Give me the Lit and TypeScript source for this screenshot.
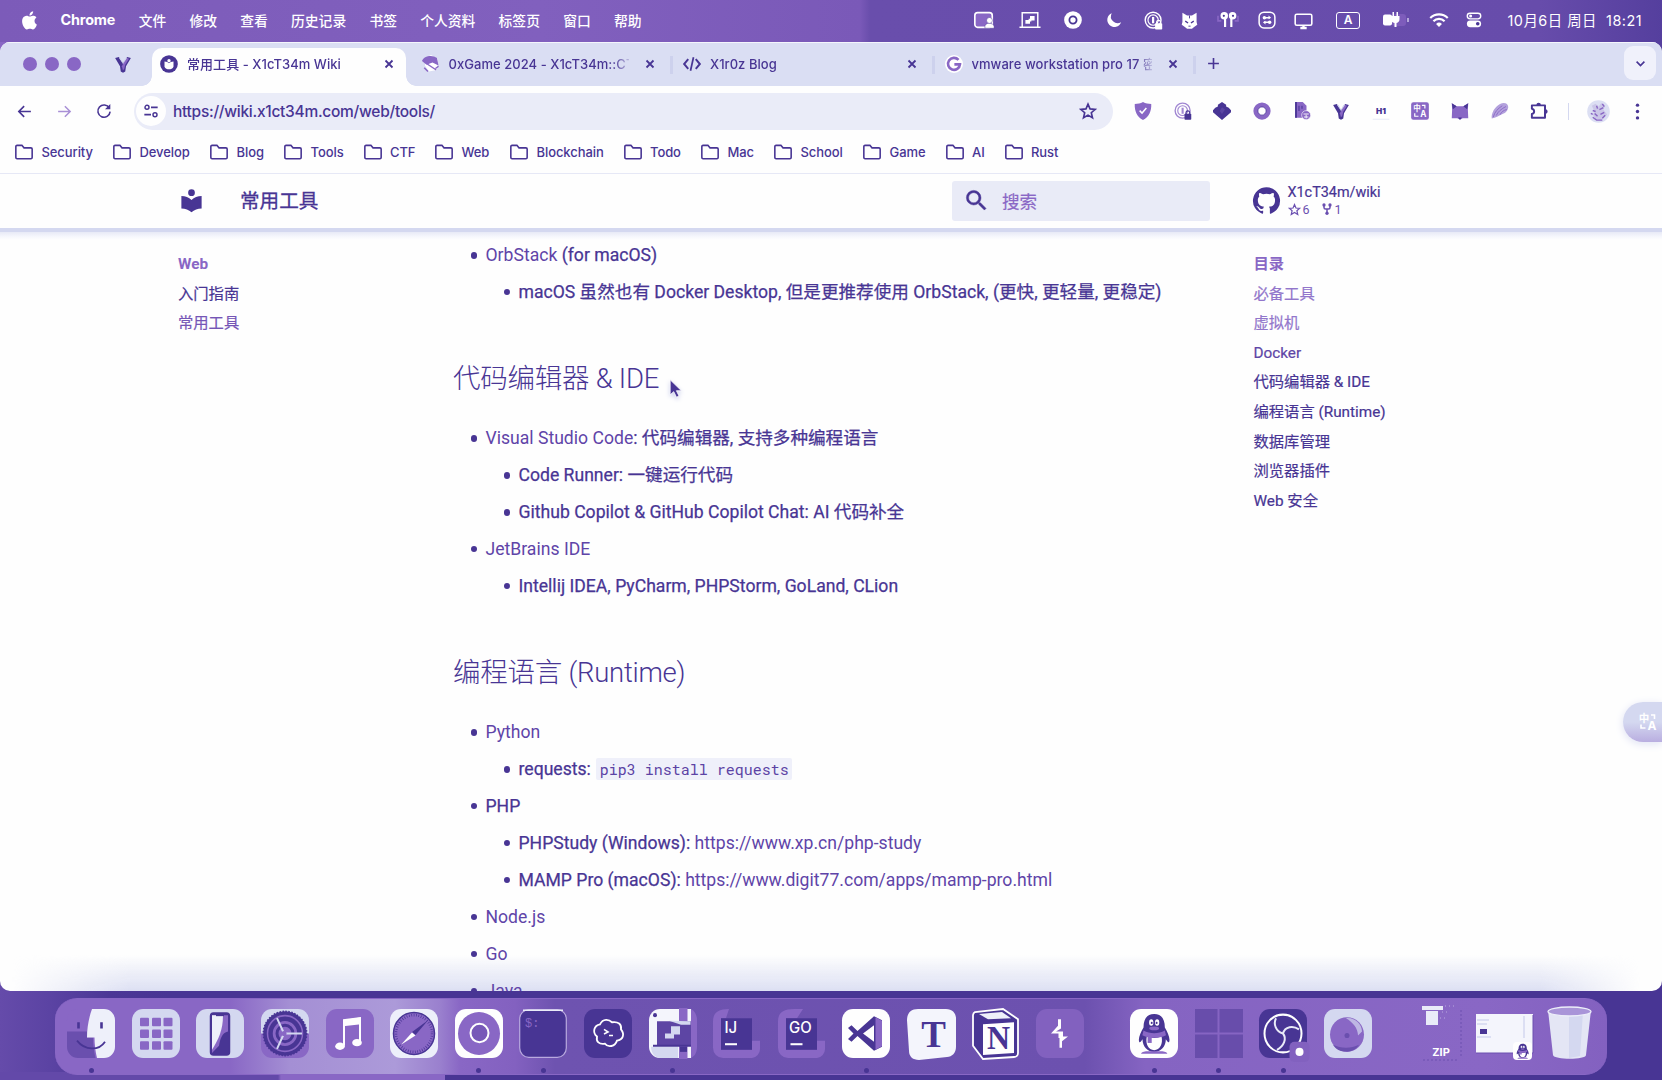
import { LitElement, html, svg, css, nothing } from "lit";
import { customElement, property } from "lit/decorators.js";
import { classMap } from "lit/directives/class-map.js";

const D = "#483594";
const M = "#8967c5";
const L = "#d4d8f0";
const W = "#fefefe";

const onePassword = (ring: string, lock: string) => svg`
  <circle cx="11.5" cy="11.5" r="10" fill="none" stroke=${ring} stroke-width="1.8"/>
  <circle cx="11.5" cy="11.5" r="6.5" fill="none" stroke=${ring} stroke-width="1.5"/>
  <path d="M11.5 7.5v8" stroke=${ring} stroke-width="2.8"/>
  <rect x="14" y="15.500" width="9" height="8" rx="1" fill=${lock}/>
  <path d="M16 16v-1.8a2.500 2.500 0 0 1 5 0V16" fill="none" stroke=${lock} stroke-width="1.6"/>`;

const yMark = svg`
  <path d="M1.500 4l5-1.500 5.500 8v13l-3-1.500-1-7z" fill=${D}/>
  <path d="M22.500 4l-5-1.500-5.500 8v13l3-1.500 1-7z" fill=${D}/>
  <path d="M17 3.500l3 1.500-5 8-1.500 6-1.500 1V11z" fill=${M}/>
  <path d="M6.500 3.500l2.500.500 3 6.500 3-6.500 2.500-.500L12 12z" fill=${L}/>
  <path d="M12 12v9l-1.500-6z" fill=${M}/>`;

const penguin = svg`
  <path d="M12 1c4.500 0 6.500 3 6.500 7.500 1.700 2.600 3.500 6 2.600 8-.5 .5-1.300-.5-2-1.500 0 4-3 7-7.100 7s-7.100-3-7.100-7c-.7 1-1.500 2-2 1.500-.9-2 .9-5.400 2.600-8C5.500 4 7.500 1 12 1z" fill=${D}/>
  <path d="M7 21.500c-2 .2-3 .8-3 1.500h16c0-.7-1-1.300-3-1.500z" fill=${M}/>
  <path d="M7.500 13.500c3 1 6 1 9 0 1 4-1 7.500-4.500 7.500s-5.500-3.500-4.500-7.500z" fill=${W}/>
  <path d="M5.500 10.200c4 2 9 2 13 0l.7 2.500c-4.500 2-10 2-14.400 0z" fill=${M}/>
  <path d="M8 13h2.500v4H8z" fill=${M}/>
  <ellipse cx="10.200" cy="5.800" rx="1.300" ry="1.800" fill=${W}/><ellipse cx="13.800" cy="5.800" rx="1.300" ry="1.800" fill=${W}/>
  <circle cx="10.500" cy="6" r=".6" fill=${D}/><circle cx="13.500" cy="6" r=".6" fill=${D}/>
  <ellipse cx="12" cy="9" rx="3" ry="1" fill=${M}/>`;

/* Every glyph is drawn in a 24 x 24 box. */
const glyphs: Record<string, unknown> = {
  apple: svg`<path fill="currentColor" d="M17.050 12.540c-.03-2.900 2.370-4.290 2.480-4.360-1.350-1.970-3.450-2.240-4.200-2.270-1.790-.18-3.490 1.050-4.400 1.050-.9 0-2.300-1.030-3.790-1-1.950.03-3.740 1.130-4.750 2.880-2.020 3.510-.52 8.710 1.450 11.560.97 1.400 2.120 2.960 3.630 2.900 1.460-.06 2.010-.94 3.770-.94s2.260.94 3.800.91c1.570-.03 2.560-1.420 3.520-2.820 1.110-1.620 1.570-3.190 1.590-3.270-.03-.02-3.050-1.170-3.100-4.640zM14.150 4.030C14.960 3.050 15.500 1.690 15.350.34c-1.160.05-2.560.77-3.390 1.750-.74.86-1.390 2.240-1.220 3.560 1.290.1 2.610-.66 3.410-1.620z"/>`,
  screenUser: svg`<rect x="2" y="4" width="19" height="16" rx="3" fill=${M} stroke="#fff" stroke-width="1.800"/><path d="M13 21v-2c0-2 2-3.500 4.500-3.500s5.500 1.500 5.500 3.500v2z" fill="#fff" stroke=${D} stroke-width=".5"/><circle cx="18" cy="12.500" r="3.200" fill="#fff" stroke=${D} stroke-width=".5"/>`,
  laptop: svg`<path d="M3.500 19V4h17v15M0.500 20h23" fill="none" stroke="#fff" stroke-width="1.600"/><path d="M7 12h5v4H7z M12 7.500h5v5h-5z M10.500 10.500h3v3h-3z" fill="#fff"/>`,
  ring: svg`<circle cx="12" cy="12" r="11.800" fill="#fff"/><circle cx="12" cy="12" r="4.800" fill="#fff" stroke=${D} stroke-width="2.400"/>`,
  moon: svg`<path d="M9 3a9.500 9.500 0 1 0 12.500 12A9 9 0 0 1 9 3z" fill="#fff"/>`,
  passMenu: onePassword("#fff", "#fff"),
  cat: svg`<path d="M2 1l6.500 4h7L22 1v13l1 4-4.500 3-3 2.500h-7L5.500 21 1 18l1-4z" fill="#fff"/><path d="M6 13l4 2.500M18 13l-4 2.500" stroke=${D} stroke-width="2"/><path d="M12 5v4M10.500 20h3" stroke=${D} stroke-width="1.300"/>`,
  pods: svg`<circle cx="7.500" cy="7" r="4.500" fill="#fff"/><circle cx="17.500" cy="7" r="4.500" fill="#fff"/><path d="M8.500 9v11.500M16 9v11.500" stroke="#fff" stroke-width="2.600"/><circle cx="7" cy="7" r="1.300" fill=${D}/><circle cx="18" cy="7" r="1.300" fill=${D}/><path d="M0 7v6h4M24 7v6h-4" stroke=${M} fill="none" stroke-width="2"/>`,
  swap: svg`<rect x="1.500" y="1.500" width="21" height="21" rx="6.500" fill="none" stroke="#fff" stroke-width="2"/><path d="M7 9h9M8 15h9" stroke="#fff" stroke-width="2"/><circle cx="8.500" cy="9" r="2.300" fill="#fff"/><circle cx="15.500" cy="15" r="2.300" fill="#fff"/><path d="M14 6l3.500 3-3.500 2z M10 13l-3.500 2 3.500 3z" fill="#fff"/>`,
  display: svg`<rect x="1.500" y="4" width="21" height="14" rx="2" fill="none" stroke="#fff" stroke-width="2"/><path d="M8 21.500h8M12 18v3.500" stroke="#fff" stroke-width="3"/>`,
  wifi: svg`<path d="M1.500 9.500a15 15 0 0 1 21 0M5.300 13.500a9.500 9.500 0 0 1 13.400 0" fill="none" stroke="#fff" stroke-width="2.600"/><path d="M8.500 16.700a5 5 0 0 1 7 0L12 20.500z" fill="#fff"/>`,
  control: svg`<rect x="3" y="3" width="18" height="7.500" rx="3.750" fill="none" stroke="#fff" stroke-width="1.800"/><circle cx="7.500" cy="6.750" r="2" fill="#fff"/><rect x="2.500" y="12.500" width="19" height="9" rx="4.500" fill="#fff"/><circle cx="17" cy="17" r="2.400" fill=${D}/>`,
  back: svg`<path d="M21 12H4M11.500 4.500L4 12l7.500 7.500" fill="none" stroke="currentColor" stroke-width="2.300"/>`,
  forward: svg`<path d="M3 12h17M12.500 4.500L20 12l-7.500 7.500" fill="none" stroke="currentColor" stroke-width="2.100"/>`,
  reload: svg`<path d="M20 7.500A9.200 9.200 0 1 0 21.200 13" fill="none" stroke="currentColor" stroke-width="2.400"/><path d="M21.500 1.500v8h-8z" fill="currentColor"/>`,
  tune: svg`<circle cx="6" cy="6.500" r="3" fill="none" stroke="currentColor" stroke-width="2.200"/><path d="M12 6.500h10M2 17.500h10" stroke="currentColor" stroke-width="2.400"/><circle cx="18" cy="17.500" r="3" fill="none" stroke="currentColor" stroke-width="2.200"/>`,
  star: svg`<path d="M12 2.800l2.700 6.400 6.900.6-5.200 4.500 1.600 6.800-6-3.600-6 3.600 1.600-6.800-5.200-4.500 6.900-.6z" fill="none" stroke="currentColor" stroke-width="2.200"/>`,
  folder: svg`<path d="M2.200 5.500c0-.9.600-1.500 1.500-1.500H9.500l2.500 3h8.300c.9 0 1.500.6 1.500 1.500v10c0 .9-.6 1.500-1.500 1.500H3.700c-.9 0-1.500-.6-1.500-1.500z" fill="none" stroke="currentColor" stroke-width="1.900"/>`,
  close: svg`<path d="M5 5l14 14M19 5L5 19" stroke="currentColor" stroke-width="3.600"/>`,
  plus: svg`<path d="M12 2v20M2 12h20" stroke="currentColor" stroke-width="3"/>`,
  chevron: svg`<path d="M3.500 8l8.500 8.500L20.500 8" fill="none" stroke="currentColor" stroke-width="3.600"/>`,
  reader: svg`<path fill="currentColor" d="M12 8a3 3 0 0 0 3-3 3 3 0 0 0-3-3 3 3 0 0 0-3 3 3 3 0 0 0 3 3m0 3.540C9.640 9.350 6.500 8 3 8v11c3.500 0 6.640 1.350 9 3.540 2.360-2.190 5.500-3.540 9-3.540V8c-3.500 0-6.640 1.350-9 3.540z"/>`,
  readerBadge: svg`<circle cx="12" cy="12" r="11.800" fill=${D}/><path d="M6 8.500c2.800 0 4.500 1 6 2.500 1.500-1.500 3.200-2.500 6-2.500v7c-1 2.300-3.500 3.500-6 3.500s-5-1.200-6-3.500z" fill=${W}/><circle cx="12" cy="7.500" r="2.200" fill=${W}/>`,
  anime: svg`<path d="M4 4l8-4 9 5-1 15-11 2-5-8z" fill="#fff"/><path d="M0 8C2 1 14-1 20 4l2 10-8-4-8 3z" fill=${M}/><path d="M3 17l5 5M18 18l4-3M7 12l12 8" stroke=${M} stroke-width="2"/>`,
  code: svg`<path d="M7 5.500L1.500 12 7 18.500M17 5.500l5.500 6.500-5.500 6.500" fill="none" stroke="currentColor" stroke-width="2.600"/><path d="M14 3l-4 18" stroke="currentColor" stroke-width="2.300"/>`,
  google: svg`<circle cx="12" cy="12" r="12" fill="#fff"/><path d="M18 6.500A8 8 0 1 0 20 12.500h-7.500" fill="none" stroke=${M} stroke-width="3.400"/>`,
  yMark,
  shield: svg`<path d="M12 0c3.500 2 7 2.500 11 2.500C23.500 12 20 19.500 12 24 4 19.500.500 12 1 2.500 5 2.500 8.500 2 12 0z" fill=${M}/><path d="M7.500 11.500l3.200 3.200L16.500 8" fill="none" stroke="#fff" stroke-width="2"/>`,
  passExt: onePassword("#a187d2", D),
  cube: svg`<path d="M12 0l5.500 3.800V6L21 7.500 24 11v2.500L19 18l-7 6-7-6-5-4.500V11l3-3.500L6.500 6V3.800z" fill=${D}/><path d="M9 12l3-5 4 3-4 6z" fill="#5b46a3"/>`,
  donut: svg`<circle cx="12" cy="12" r="8.500" fill="#fff" stroke=${M} stroke-width="6"/><circle cx="12" cy="12" r="5.500" fill="none" stroke=${D} stroke-width="1"/>`,
  docBug: svg`<path d="M3 0h10l5 5v16H3z" fill=${M}/><path d="M4 0v21" stroke=${D} stroke-width="2.400"/><path d="M8 5v7M12 5v4" stroke=${D} stroke-width="1.400"/><circle cx="17.500" cy="17.500" r="6" fill=${M} stroke="#fff" stroke-width=".8"/><path d="M14 16h7M17.500 17v5M14.500 20h6" stroke="#fff" stroke-width="1.200"/>`,
  h1: svg`<rect x="1" y="1" width="22" height="22" rx="2" fill="#fff"/><path d="M1 23h22" stroke="#e6e8f6" stroke-width="1.300"/><text x="12" y="16.500" text-anchor="middle" class="glyph-h1">H1</text>`,
  translate: svg`<rect x=".2" y=".2" width="23.600" height="23.600" rx="3" fill=${M}/><text x="8" y="12" text-anchor="middle" class="glyph-cn">中</text><text x="16.500" y="20.500" text-anchor="middle" class="glyph-a">A</text><path d="M14.500 4.500h4v4M5 15v4h5" stroke="#fff" fill="none" stroke-width="1.600"/>`,
  fox: svg`<path d="M1 1.500l6.500 4h9L23 1.500 22.500 10 23 21.500h-7.500L12 23.500 8.500 21.500H1L1.500 10z" fill=${M}/><path d="M1 1.500l6.500 4-5 4zM23 1.500l-6.500 4 5 4zM9.500 20.500h5L12 23.500z" fill=${D}/>`,
  leaf: svg`<path d="M1 22C0 15 5 6 12 2.500c6-2.500 11-.5 11 4.500-1 6-5 8.500-9 9.500-3 2-8 4-13 5.500z" fill="#b3a1dc"/><path d="M3 20c2-7 6-11 12-15M7 18c2-5 7-9 13-12M12 17c2-4 5-6 9-7" stroke=${M} stroke-width="1.200" fill="none"/>`,
  puzzle: svg`<path d="M2.500 4.500h17.500v16.500h-17.500v-5c4-1 4-6 0-7z" fill="none" stroke="currentColor" stroke-width="2.600" stroke-linejoin="round"/><path d="M8.500 4a3 3 0 0 1 6 0zM20.500 9.500a3 3 0 0 1 0 6z" fill="currentColor"/>`,
  avatar: svg`<circle cx="12" cy="12" r="11.800" fill="#dcdff3"/><path d="M5 6l4-2 3 3 3-4 4 3-2 4 4 5-6 6-6-1-3-5 2-3z" fill="#cbc6e8"/><path d="M6 11l3 1M13 10l4-2M8 14l3 3M14 15l4-2M6 18l4 3h6M16 4l2 3M10 6l1 3M4 14l2 1M19 16l-3 3" stroke=${M} stroke-width="1.500" fill="none"/>`,
  dots: svg`<circle cx="12" cy="3" r="2.400" fill="currentColor"/><circle cx="12" cy="12" r="2.400" fill="currentColor"/><circle cx="12" cy="21" r="2.400" fill="currentColor"/>`,
  search: svg`<path fill="currentColor" stroke="currentColor" stroke-width=".4" d="M9.500 3A6.500 6.500 0 0 1 16 9.500c0 1.610-.59 3.090-1.560 4.230l.27.270h.79l5 5-1.500 1.500-5-5v-.79l-.27-.27A6.516 6.516 0 0 1 9.500 16 6.500 6.500 0 0 1 3 9.500 6.500 6.500 0 0 1 9.500 3m0 2C7 5 5 7 5 9.500S7 14 9.500 14 14 12 14 9.500 12 5 9.500 5z"/>`,
  github: svg`<path fill="currentColor" d="M12 .3a12 12 0 0 0-3.800 23.400c.6.100.8-.3.800-.6v-2c-3.300.7-4-1.600-4-1.600-.6-1.400-1.400-1.800-1.400-1.800-1-.7.100-.7.100-.7 1.200 0 1.900 1.200 1.900 1.200 1 1.800 2.800 1.300 3.500 1 0-.8.400-1.300.7-1.600-2.700-.3-5.500-1.300-5.500-6 0-1.200.5-2.300 1.300-3.100-.2-.4-.6-1.600 0-3.200 0 0 1-.3 3.400 1.200a11.500 11.500 0 0 1 6 0c2.300-1.500 3.300-1.200 3.300-1.200.6 1.600.2 2.800 0 3.200.9.800 1.300 1.900 1.300 3.200 0 4.600-2.800 5.600-5.500 5.900.5.400.9 1 .9 2.200v3.300c0 .3.100.7.800.6A12 12 0 0 0 12 .3"/>`,
  fork: svg`<circle cx="6" cy="4" r="3.300" fill="currentColor"/><circle cx="18" cy="4" r="3.300" fill="currentColor"/><circle cx="12" cy="20.500" r="3.300" fill="currentColor"/><path d="M6 5v4c0 2 1 3 3 3h6c2 0 3-1 3-3V5M12 12v8" fill="none" stroke="currentColor" stroke-width="3"/>`,
  cursor: svg`<path d="M4 1v19l4.500-4 3.500 7 3.200-1.500-3.300-6.700h6.300z" fill=${D} stroke="#fff" stroke-width="1"/>`,
};

const tile = (fill: string) => svg`<rect width="48" height="48" rx="11" fill=${fill}/>`;

/* Dock artwork, drawn in a 48 x 48 box. */
const apps: Record<string, unknown> = {
  finder: svg`${tile(M)}<path d="M0 22h20v6h6c0 7 1 14 2.500 20H11A11 11 0 0 1 0 37z" fill="#6a4fae"/><path d="M25 0h12a11 11 0 0 1 11 11v26a11 11 0 0 1-11 11h-7c-1.500-6-2.500-13-2.500-20H20c0-10 2-20 5-28z" fill="#eef0fa"/><path d="M11.500 13v6M34.500 13v6" stroke=${D} stroke-width="2.600"/><path d="M10 31c8 10 22 10 28 1" fill="none" stroke=${D} stroke-width="1.800"/>`,
  launchpad: svg`${tile(L)}${[8.500, 20, 31.500].map((y) => [8, 20, 31.500].map((x) => svg`<rect x=${x} y=${y} width="9" height="8.500" rx="1" fill=${M}/>`))}`,
  phone: svg`${tile(L)}<rect x="14.500" y="4" width="19" height="41" rx="3" fill=${D} stroke=${D} stroke-width="1.500"/><path d="M16 6h16v16c-6 1-8 8-9 14l-7 7z" fill=${M}/><path d="M16 6h11c0 14-4 23-11 34z" fill="#eef0fa"/><path d="M20 4h8v3h-8z" fill=${D}/>`,
  settings: svg`<path d="M11 0h26a11 11 0 0 1 11 11v14H0V11A11 11 0 0 1 11 0z" fill=${L}/><path d="M0 24h48v13a11 11 0 0 1-11 11H11A11 11 0 0 1 0 37z" fill=${M}/><circle cx="24" cy="24" r="20" fill=${M} stroke=${D} stroke-width="3.500"/><circle cx="24" cy="24" r="21.700" fill="none" stroke=${D} stroke-width="1.500" stroke-dasharray="1.500 1.500"/><circle cx="24" cy="24" r="14.500" fill="none" stroke=${D} stroke-width="4.500"/><circle cx="24" cy="24" r="8" fill="none" stroke=${D} stroke-width="3"/><path d="M23 24L16 9M24 24h17M23 24L16 39" stroke=${L} stroke-width="2"/><circle cx="23" cy="24" r="2.500" fill=${M}/>`,
  music: svg`${tile(M)}<path d="M18 36V11l16-2v24" fill="none" stroke=${W} stroke-width="2"/><path d="M17 11l18-3v7l-18 2z" fill=${W}/><ellipse cx="14" cy="36.500" rx="4.800" ry="3.600" fill=${W}/><ellipse cx="31" cy="33" rx="4.800" ry="3.600" fill=${W}/>`,
  safari: svg`${tile("#edeffa")}<circle cx="24" cy="24" r="20.500" fill=${M} stroke=${D} stroke-width="1.500"/><circle cx="24" cy="24" r="18" fill="none" stroke=${D} stroke-width="2.500" stroke-dasharray=".7 1.700"/><path d="M38 11L22 22.500l3.500 3z" fill=${D}/><path d="M11 35l11-12 3.500 3z" fill=${W}/>`,
  chrome: svg`${tile(W)}<circle cx="24" cy="24" r="21" fill=${M}/><circle cx="24.500" cy="23.500" r="9" fill="#7758b8" stroke=${W} stroke-width="2"/>`,
  terminal: svg`<rect x=".7" y=".7" width="46.600" height="46.600" rx="9" fill=${D} stroke="#b9a9df" stroke-width="1.200"/><path d="M4 1.200h40" stroke="#e9ebf8" stroke-width="1.400"/><text x="6" y="18" class="app-term">$:</text>`,
  cloud: svg`${tile(D)}<path d="M16 15c3-6 9-5 12-2 6-1 10 2 9 7 4 5 2 10-4 11-2 6-9 7-12 3-6 1-9-2-8-7-5-4-3-11 3-12z" fill="none" stroke=${W} stroke-width="1.800"/><path d="M20 20l4 2.500-4 2M25 26h4" fill="none" stroke=${W} stroke-width="1.600"/>`,
  vmware: svg`<path d="M11 0h31v48H11A11 11 0 0 1 0 37V11A11 11 0 0 1 11 0z" fill="#f4f5fc"/><path d="M2 37h27v11H11c-5 0-9-5-9-11z" fill=${L}/><path d="M42 0c4 2 6 6 6 11v26c0 5-2 9-6 11z" fill=${M}/><rect x="30" y="-1" width="8.500" height="50" fill=${M}/><circle cx="6" cy="6" r="2" fill=${D}/><rect x="8" y="12" width="34" height="24" fill="#5d45a4"/><path d="M16 24h9v5h-9zM22 17h9v8h-9z" fill=${L}/><path d="M4 36h38" stroke=${D} stroke-width="2"/><path d="M20 11.500l12 4h9.500v-3.500z" fill=${L}/><path d="M31 37h7v5h-7z" fill=${D}/>`,
  intellij: svg`<path d="M0 12C0 4 5 0 16 0l-3 9h26v22l8 0v8a9 9 0 0 1-8 9H10A10 10 0 0 1 0 38z" fill=${M}/><rect x="8" y="9" width="31" height="31" fill=${D}/><text x="11.500" y="24" class="app-jb">IJ</text><path d="M12 34.500h12" stroke=${W} stroke-width="2"/>`,
  goland: svg`<path d="M0 12C0 4 5 0 16 0h9l-6 9h20v22l8 0v8a9 9 0 0 1-8 9H10A10 10 0 0 1 0 38z" fill=${M}/><rect x="8" y="9" width="31" height="31" fill=${D}/><text x="11" y="24" class="app-jb">GO</text><path d="M12.500 34.500h12" stroke=${W} stroke-width="2"/>`,
  vscode: svg`${tile(W)}<path d="M32 7l8 4v26l-8 4L15.500 26.500l-6 5.500L6 29.500 11.500 24 6 18.500 9.500 16l6 5.500z" fill=${D}/><path d="M32 16v16L21 24z" fill=${W}/><path d="M33.500 8l6.500 3.500v25L33.500 40z" fill=${M}/>`,
  typora: svg`<path d="M11 0h28c6 0 10 4 10 9v28c0 6-4 10-9 10L12 50C6 50 2 47 2 41L0 11C0 4 4 0 11 0z" fill="#f4f5fc"/><text x="26.500" y="37" text-anchor="middle" class="app-t">T</text>`,
  notion: svg`<path d="M3 3l28-3 15 10v33a4 4 0 0 1-4 4l-31 2-10-13V6a4 4 0 0 1 2-3z" fill=${D} stroke=${W} stroke-width="1.800"/><path d="M7 5l23-2 9 6-23 1z" fill="#eef0fa"/><path d="M11 15l31-2v30l-31 2z" fill=${W}/><text x="26.500" y="39" text-anchor="middle" class="app-n">N</text>`,
  burp: svg`${tile("#8261bf")}<path d="M24 10.500v9l-8 3h12l2 4.500-6.500 2.500V38M24 38v-9M28 23l-4-1" fill="none" stroke=${W} stroke-width="0"/><path d="M25 10v9l-5 3h7v5h5l-6 4.500V38h-2.500V28.500h-1v-4.500h-7.500l7-7.500V10z" fill=${W}/>`,
  qq: svg`${tile(W)}<g transform="translate(4.500 3) scale(1.640 1.780)">${penguin}</g>`,
  windows: svg`<path d="M0 0h22.500v23H0zM24.500 0H48v23H24.500zM0 25h22.500v23H0zM24.500 25H48v23H24.500z" fill="#684dab"/>`,
  obs: svg`${tile(D)}<circle cx="24" cy="24" r="18.500" fill="none" stroke=${W} stroke-width="2"/><path d="M24 24c-7-2-10-9-7-15M24 24c2-7 10-8 16-4M24 24c4 5 1 12-6 16" fill="none" stroke="#e9ebf8" stroke-width="2"/><rect x="30.500" y="32" width="20" height="20" rx="5" fill="#8261bf"/><circle cx="40.500" cy="42" r="4" fill=${W}/>`,
  pearl: svg`${tile(L)}<circle cx="23" cy="25" r="17" fill=${M}/><path d="M22 9c9-1 16 6 16 13l-4 4c0-7-5-13-12-17z" fill=${L} opacity=".7"/><path d="M9 35c5 9 21 9 26 0-8 4-18 4-26 0z" fill="#6a4fae"/><circle cx="23" cy="26" r="2.500" fill="#6a4fae"/>`,
};

@customElement("ui-glyph")
class UiGlyph extends LitElement {
  @property() name = "";
  @property({ type: Number }) size = 18;
  static styles = css`
    :host { display: inline-flex; flex: none; }
    svg { display: block; overflow: visible; }
    .glyph-h1 { font: 900 11px Inter, sans-serif; fill: #483594; }
    .glyph-cn { font: 700 10px "Noto Sans CJK SC", sans-serif; fill: #fff; }
    .glyph-a { font: 700 11px Inter, sans-serif; fill: #fff; }
  `;
  render() {
    return html`<svg width=${this.size} height=${this.size} viewBox="0 0 24 24">${glyphs[this.name] ?? nothing}</svg>`;
  }
}

@customElement("dock-app")
class DockApp extends LitElement {
  @property() name = "";
  @property({ type: Boolean }) running = false;
  static styles = css`
    :host { display: flex; flex-direction: column; align-items: center; width: 64.6px; flex: none; padding-top: 10px; }
    svg { display: block; overflow: visible; }
    .dot { width: 5px; height: 5px; border-radius: 50%; margin-top: 9.500px; }
    .dot.on { background: #483594; }
    .app-term { font: 12px "Liberation Mono", monospace; fill: #8967c5; }
    .app-jb { font: 500 15px Inter, sans-serif; fill: #fefefe; }
    .app-t { font: 700 37px "Liberation Serif", serif; fill: #483594; }
    .app-n { font: 700 32px "Liberation Serif", serif; fill: #483594; }
  `;
  render() {
    return html`<svg width="48" height="49" viewBox="0 0 48 48" preserveAspectRatio="none">${apps[this.name]}</svg>
      <span class=${classMap({ dot: true, on: this.running })}></span>`;
  }
}

interface Entry { text?: string; link?: string; code?: string; children?: Entry[]; }

const intro: Entry[] = [
  { link: "OrbStack", text: " (for macOS)", children: [
    { text: "macOS 虽然也有 Docker Desktop, 但是更推荐使用 OrbStack, (更快, 更轻量, 更稳定)" },
  ] },
];
const editors: Entry[] = [
  { link: "Visual Studio Code", text: ": 代码编辑器, 支持多种编程语言", children: [
    { text: "Code Runner: 一键运行代码" },
    { text: "Github Copilot & GitHub Copilot Chat: AI 代码补全" },
  ] },
  { link: "JetBrains IDE", children: [{ text: "Intellij IDEA, PyCharm, PHPStorm, GoLand, CLion" }] },
];
const runtimes: Entry[] = [
  { link: "Python", children: [{ text: "requests: ", code: "pip3 install requests" }] },
  { text: "PHP", children: [
    { text: "PHPStudy (Windows): ", link: "https://www.xp.cn/php-study" },
    { text: "MAMP Pro (macOS): ", link: "https://www.digit77.com/apps/mamp-pro.html" },
  ] },
  { link: "Node.js" },
  { link: "Go" },
  { link: "Java" },
];

const menus = ["文件", "修改", "查看", "历史记录", "书签", "个人资料", "标签页", "窗口", "帮助"];
const tabs = [
  { icon: "readerBadge", title: "常用工具 - X1cT34m Wiki", active: true },
  { icon: "anime", title: "0xGame 2024 - X1cT34m::CTF" },
  { icon: "code", title: "X1r0z Blog" },
  { icon: "google", title: "vmware workstation pro 17 密钥" },
];
const bookmarks: [string, number][] = [
  ["Security", 98], ["Develop", 97], ["Blog", 74], ["Tools", 79.5], ["CTF", 71.5], ["Web", 75],
  ["Blockchain", 113.5], ["Todo", 77.500], ["Mac", 73], ["School", 89], ["Game", 82.500], ["AI", 59], ["Rust", 80],
];
const extensions = ["shield", "passExt", "cube", "donut", "docBug", "yMark", "h1", "translate", "fox", "leaf", "puzzle"];
const toc: [string, string][] = [
  ["目录", "head"], ["必备工具", "passed"], ["虚拟机", "passed"], ["Docker", "current"],
  ["代码编辑器 & IDE", ""], ["编程语言 (Runtime)", ""], ["数据库管理", ""], ["浏览器插件", ""], ["Web 安全", ""],
];
const dock: [string, boolean][] = [
  ["finder", true], ["launchpad", false], ["phone", false], ["settings", false], ["music", false], ["safari", false],
  ["chrome", true], ["terminal", true], ["cloud", false], ["vmware", true], ["intellij", false], ["goland", false],
  ["vscode", true], ["typora", false], ["notion", false], ["burp", false],
];
const dockRight: [string, boolean][] = [["qq", true], ["windows", true], ["obs", true], ["pearl", false]];

@customElement("app-root")
class AppRoot extends LitElement {
  static styles = css`
    :host {
      --dark: #483594; --mid: #8967c5; --light: #d4d8f0;
      display: block; color: var(--dark);
      font-family: Inter, "Noto Sans CJK SC", sans-serif;
    }
    * { box-sizing: border-box; }
    .desktop {
      width: 1662px; height: 1080px; overflow: hidden; position: relative;
      display: flex; flex-direction: column;
      background: linear-gradient(90deg, #654baa 0, #5b43a3 50px, #4b3796 110px, #483594 170px);
    }
    .menubar {
      height: 42px; flex: none; display: flex; align-items: center; padding: 0 20px 2px 20.5px;
      color: #fff; font-size: 13.8px; font-weight: 500; position: relative;
      background: linear-gradient(90deg, #7c5bb9 0, #8160be 540px, #7a59b8 860px, #694eac 870px, #674cab 1540px, #553f9e 100%);
    }
    .menubar ui-glyph { color: #fff; }
    .menus { display: flex; gap: 23.200px; margin-left: 21px; align-items: center; white-space: nowrap; padding-bottom: 1px; }
    .menus b { font-size: 14.4px; font-weight: 700; width: 55px; letter-spacing: -.15px; }
    .status { position: absolute; right: 18.500px; top: 0; height: 40px; display: flex; align-items: center; }
    .slot { display: flex; justify-content: center; align-items: center; flex: none; }
    .ime { width: 24px; height: 17px; border: 1.500px solid #fff; border-radius: 3px; font-size: 12px; line-height: 14px; text-align: center; font-weight: 600; }
    .battery { display: block; }
    .clock { width: 136px; padding-bottom: 2px; font-size: 14.400px; white-space: nowrap; font-weight: 400; letter-spacing: .5px; }
    .window { height: 949px; flex: none; border-radius: 10px; overflow: hidden; background: #fefefe; display: flex; flex-direction: column; position: relative; }
    .corner { position: absolute; left: 0; top: 42px; width: 100%; height: 12px; background: linear-gradient(90deg, #8967c5 50%, #553f9e 50%); }
    .strip { height: 43.500px; flex: none; display: flex; background: #dadef3; border-top: 1px solid #f4f5fc; }
    .lights { display: flex; gap: 8px; padding-left: 22.500px; width: 114px; align-items: center; }
    .lights i { width: 14px; height: 14px; border-radius: 50%; background: var(--mid); }
    .pin { width: 34px; display: flex; align-items: center; }
    .tab { width: 261.500px; padding: 5px 3.500px 0; display: flex; position: relative; }
    .face { flex: 1; display: flex; align-items: center; padding: 0 8px 6px 8.500px; border-radius: 10px 10px 0 0; min-width: 0; }
    .active .face { background: #fefefe; }
    .active .face::before, .active .face::after { content: ""; position: absolute; bottom: 0; width: 10px; height: 10px; }
    .active .face::before { left: -6.500px; background: radial-gradient(circle at 0 0, transparent 9.500px, #fefefe 10px); }
    .active .face::after { right: -6.500px; background: radial-gradient(circle at 100% 0, transparent 9.500px, #fefefe 10px); }
    .title { width: 180px; margin: 0 15.500px 0 9px; font-size: 13px; font-weight: 500; white-space: nowrap; overflow: hidden; letter-spacing: .05px;
      mask-image: linear-gradient(90deg, #000 164px, transparent 184px); }
    .divider { position: absolute; right: -2px; top: 13px; width: 3px; height: 18px; background: #cdd1ed; }
    .newtab { padding: 0 0 1px 12.500px; display: flex; align-items: center; }
    .more { margin: 3px 6px 0 auto; width: 32px; height: 34px; border-radius: 9px; background: #f0f1fb; display: flex; align-items: center; justify-content: center; }
    .toolbar { height: 44px; padding: 0; flex: none; display: flex; align-items: center; margin-top: 3.500px; }
    .nav { display: flex; padding-left: 5px; width: 134px; }
    .nav .slot { width: 39.500px; }
    .fade { color: #a990d6; }
    .omnibox { width: 979px; height: 37px; border-radius: 19px; background: #eaecf8; display: flex; align-items: center; padding: 0 16px 0 2px; }
    .site { width: 30px; height: 30px; border-radius: 50%; background: #fefefe; display: flex; align-items: center; justify-content: center; }
    .url { margin-left: 7px; font-size: 15.500px; flex: 1; font-weight: 450; letter-spacing: -.28px; }
    .exts { display: flex; align-items: center; margin-left: 10.500px; }
    .exts .slot { width: 39.600px; }
    .bar { width: 1.500px; height: 17px; background: var(--light); margin: 0 17.500px 0 8.500px; }
    .exts .last { margin-left: 8px; }
    .bookmarks { height: 41px; flex: none; display: flex; align-items: center; padding: 0 0 2px 14px; border-bottom: 1px solid #e6e8f6; font-size: 13px; font-weight: 500; }
    .mark { display: flex; align-items: center; gap: 7.500px; flex: none; white-space: nowrap; letter-spacing: -.08px; }
    .page { flex: 1; min-height: 0; display: flex; flex-direction: column; font-family: Roboto, "Noto Sans CJK SC", sans-serif; position: relative; }
    .header { height: 54px; flex: none; display: flex; align-items: center; padding: 0 0 1.500px 178px; position: relative; background: #fefefe; }
    .shade { height: 12px; flex: none; background: linear-gradient(#d4d8f0 0 4px, #e9ebf7 4.500px, #f7f8fd 9px, #fefefe); margin-bottom: -12px; position: relative; }
    .site-title { margin-left: 35px; padding-bottom: 1px; font-size: 19.600px; width: 712px; font-weight: 400; -webkit-text-stroke: .3px currentColor; }
    .search { width: 258px; height: 40px; margin-top: 2px; border-radius: 3px; background: #e9ebf7; display: flex; align-items: center; padding: 0 0 1px 11px; gap: 12px; font-size: 17.600px; color: var(--mid); -webkit-text-stroke: .2px currentColor; }
    .search ui-glyph { color: var(--dark); }
    .repo { display: flex; align-items: center; margin-left: 43px; gap: 7.500px; }
    .repo-name { font-size: 14.400px; line-height: 18px; -webkit-text-stroke: .2px currentColor; }
    .facts { display: flex; align-items: center; gap: 2px; font-size: 12.500px; line-height: 15px; color: #6a4fb0; }
    .facts ui-glyph:nth-of-type(2) { margin-left: 9px; }
    .columns { flex: 1; min-height: 0; overflow: hidden; display: grid; grid-template-columns: 275px 800.500px 1fr; padding: 13px 0 0 178px; position: relative; }
    .side { display: flex; flex-direction: column; padding-top: 9px; font-size: 15.300px; line-height: 29.600px; white-space: nowrap; -webkit-text-stroke: .2px currentColor; }
    .head { font-weight: 700; color: var(--mid); -webkit-text-stroke: 0; }
    .passed { color: #9276cb; }
    .current { color: #5f46a6; }
    .here { color: #7555b6; }
    .article { font-size: 17.600px; line-height: 28.160px; white-space: nowrap; }
    h2 { margin: 53.500px 0 26px; font-weight: 300; font-size: 27.500px; line-height: 38.500px; letter-spacing: -.25px; }
    ul { margin: 0; padding: 0; list-style: none; }
    .article > ul { margin-left: 32.500px; }
    ul ul { margin-left: 33px; margin-top: 8.800px; }
    li + li { margin-top: 8.800px; }
    .line { position: relative; display: block; height: 28.160px; -webkit-text-stroke: .25px currentColor; }
    .line::before { content: ""; position: absolute; left: -15px; top: 11px; width: 6.500px; height: 6.500px; border-radius: 50%; background: var(--dark); }
    .link { color: #6044a8; -webkit-text-stroke: 0; }
    code { font: 15px/20px "Roboto Mono", "Liberation Mono", monospace; background: #eff0fa; border-radius: 2px; padding: 1px 3.500px; margin-left: 1px; color: #5c43a5; -webkit-text-stroke: 0; }
    .fog { position: absolute; left: 0; right: 0; bottom: 0; height: 36px; pointer-events: none;
      background: linear-gradient(rgba(212,216,240,0), rgba(212,216,240,.8));
      mask-image: linear-gradient(90deg, transparent 12px, #000 130px, #000 1540px, transparent 1640px); }
    .pointer { position: absolute; left: 667px; top: 379px; filter: drop-shadow(0 2px 2px #cdd1ed); }
    .float { position: absolute; right: 0; top: 702px; width: 39px; height: 40px; border-radius: 20px 0 0 20px; background: linear-gradient(#d4d8f0 50%, #b9aee0); box-shadow: 0 2px 8px #dfe2f4; display: flex; align-items: center; justify-content: center; padding-left: 10px; }
    .under { position: absolute; left: 0; bottom: 0; height: 8px; width: 445px; background: linear-gradient(90deg, #6349a9 278px, #8967c5 281px); }
    .float-mark { overflow: visible; }
    .float-cn { font: 700 10.500px "Noto Sans CJK SC", sans-serif; fill: #fff; }
    .float-a { font: 700 12px Inter, sans-serif; fill: #fff; }
    .dock {
      width: 1552px; height: 77px; margin: 7px 0 0 55px; flex: none; border-radius: 22px; display: flex; padding-left: 4px; position: relative;
      border: 1px solid #8967c5; border-width: 1px 0;
      background: linear-gradient(90deg, #8967c5 0, #8967c5 175px, #a48fd4 235px, #ac9ad9 340px, #9a80ce 385px, #8967c5 405px, #8361c0 460px, #6e53b0 500px, #6c51af 1030px, #8564c2 1090px, #8967c5 1430px, #8361c0 100%);
    }
    .spring { width: 29.500px; flex: none; }
    .rule { width: 1px; height: 55px; background: #5b44a3; margin: 11px 0 0 13.500px; }
    .extra { display: block; overflow: visible; margin-left: 16.500px; }
    .zip { font: 700 11px Inter, sans-serif; fill: #fff; }
  `;

  private entries(list: Entry[]): unknown {
    return html`<ul>${list.map((e) => {
      const link = e.link ? html`<span class="link">${e.link}</span>` : nothing;
      const textFirst = e.text?.endsWith(" ");
      return html`<li><span class="line">${textFirst ? html`${e.text}${link}` : html`${link}${e.text ?? nothing}`}${e.code ? html`<code>${e.code}</code>` : nothing}</span>${e.children ? this.entries(e.children) : nothing}</li>`;
    })}</ul>`;
  }

  private slotOf(width: number, name: string, size: number) {
    return html`<span class="slot" style="width:${width}px"><ui-glyph name=${name} size=${size}></ui-glyph></span>`;
  }

  render() {
    return html`
      <div class="desktop">
        <div class="corner"></div>
        <div class="menubar">
          <ui-glyph name="apple" size="19"></ui-glyph>
          <div class="menus"><b>Chrome</b>${menus.map((m) => html`<span>${m}</span>`)}</div>
          <div class="status">
            ${this.slotOf(47, "screenUser", 22)}${this.slotOf(45, "laptop", 22)}${this.slotOf(40, "ring", 18)}
            ${this.slotOf(43, "moon", 18)}${this.slotOf(36, "passMenu", 19)}${this.slotOf(35, "cat", 17)}
            ${this.slotOf(43, "pods", 20)}${this.slotOf(34, "swap", 18)}${this.slotOf(40, "display", 19)}
            <span class="slot" style="width:49px"><span class="ime">A</span></span>
            <span class="slot" style="width:46px"><svg class="battery" width="26" height="16" viewBox="0 0 26 16">
              <rect x="9" y="2" width="14" height="12" rx="3" fill="#7d5cbb"/><rect x="0" y="2.500" width="9" height="11" rx="2" fill="#fff"/>
              <path d="M8 4h8.500v3a4 4 0 0 1-3 4v4h-2v-4a4 4 0 0 1-3.500-4zM9.500 0H11v4H9.500zM13.500 0H15v4h-1.500z" fill="#fff"/><path d="M25 6v4" stroke="#cfc6ea" stroke-width="1.500"/></svg></span>
            ${this.slotOf(41, "wifi", 20)}${this.slotOf(29, "control", 18)}
            <span class="slot" style="width:19px"></span>
            <span class="clock">10月6日 周日&nbsp; 18:21</span>
          </div>
        </div>
        <div class="window">
          <div class="strip">
            <div class="lights"><i></i><i></i><i></i></div>
            <div class="pin"><ui-glyph name="yMark" size="18"></ui-glyph></div>
            ${tabs.map((t) => html`<div class=${classMap({ tab: true, active: !!t.active })}>
              <div class="face"><ui-glyph name=${t.icon} size="18"></ui-glyph><span class="title">${t.title}</span><ui-glyph name="close" size="12"></ui-glyph></div>
              ${t.active ? nothing : html`<span class="divider"></span>`}</div>`)}
            <div class="newtab"><ui-glyph name="plus" size="13"></ui-glyph></div>
            <div class="more"><ui-glyph name="chevron" size="11"></ui-glyph></div>
          </div>
          <div class="toolbar">
            <div class="nav">
              <span class="slot"><ui-glyph name="back" size="17"></ui-glyph></span>
              <span class="slot fade"><ui-glyph name="forward" size="17"></ui-glyph></span>
              <span class="slot"><ui-glyph name="reload" size="16"></ui-glyph></span>
            </div>
            <div class="omnibox">
              <span class="site"><ui-glyph name="tune" size="16"></ui-glyph></span>
              <span class="url">https://wiki.x1ct34m.com/web/tools/</span>
              <ui-glyph name="star" size="18"></ui-glyph>
            </div>
            <div class="exts">
              ${extensions.map((e) => html`<span class="slot"><ui-glyph name=${e} size="18"></ui-glyph></span>`)}
              <span class="bar"></span><ui-glyph name="avatar" size="23"></ui-glyph>
              <span class="slot last"><ui-glyph name="dots" size="17"></ui-glyph></span>
            </div>
          </div>
          <div class="bookmarks">
            ${bookmarks.map(([n, w]) => html`<span class="mark" style="width:${w}px"><ui-glyph name="folder" size="20"></ui-glyph>${n}</span>`)}
          </div>
          <div class="page">
            <div class="fog"></div>
            <div class="header">
              <ui-glyph name="reader" size="27"></ui-glyph>
              <span class="site-title">常用工具</span>
              <div class="search"><ui-glyph name="search" size="27"></ui-glyph>搜索</div>
              <div class="repo"><ui-glyph name="github" size="27"></ui-glyph>
                <div><div class="repo-name">X1cT34m/wiki</div>
                <div class="facts"><ui-glyph name="star" size="13"></ui-glyph>6<ui-glyph name="fork" size="12"></ui-glyph>1</div></div>
              </div>
            </div>
            <div class="shade"></div>
            <div class="columns">
              <nav class="side"><span class="head">Web</span><span>入门指南</span><span class="here">常用工具</span></nav>
              <div class="article">
                ${this.entries(intro)}
                <h2>代码编辑器 &amp; IDE</h2>
                ${this.entries(editors)}
                <h2>编程语言 (Runtime)</h2>
                ${this.entries(runtimes)}
              </div>
              <nav class="side">${toc.map(([t, c]) => html`<span class=${c}>${t}</span>`)}</nav>
            </div>
          </div>
        </div>
        <div class="under"></div>
        <div class="dock">
          ${dock.map(([n, r]) => html`<dock-app name=${n} ?running=${r}></dock-app>`)}
          <span class="spring"></span>
          ${dockRight.map(([n, r]) => html`<dock-app name=${n} ?running=${r}></dock-app>`)}
          <span class="rule"></span>
          <svg class="extra" width="200" height="76" viewBox="1412 999 200 76">
            <path d="M1424 1006h21v4h-21zM1428 1011h12v14h-12z" fill="#e9ebf8"/><path d="M1447 1006h10M1444 1012h8M1442 1018h6" stroke="#b9a9df" stroke-width="1" stroke-dasharray="1 3"/>
            <path d="M1425 1060h35M1463 1010v46" stroke="#6d51b0" stroke-width="1" stroke-dasharray="2 2"/>
            <text x="1443" y="1056" text-anchor="middle" class="zip">ZIP</text>
            <rect x="1478" y="1014" width="57" height="39" fill="#f4f5fc"/><path d="M1479 1020h12M1479 1024h10M1479 1037h14M1526 1016v22" stroke="#d4d8f0" stroke-width="1.500"/><rect x="1482" y="1029" width="7" height="5" fill="#483594"/><path d="M1535 1015v38h-57" stroke="#6d51b0" fill="none"/>
            <rect x="1515" y="1042" width="19" height="18" rx="4" fill="#fefefe"/><g transform="translate(1517 1043) scale(.64 .68)">${penguin}</g>
            <path d="M1550 1010l5 45c1 5 33 5 33 0l5-45z" fill="#e4e6f5"/><path d="M1571 1012h14l-3 44-11 2z" fill="#d4d8f0"/><ellipse cx="1571.500" cy="1011.500" rx="21.500" ry="4.500" fill="#a995d8" stroke="#eceef9" stroke-width="1.300"/>
          </svg>
        </div>
        <div class="pointer"><ui-glyph name="cursor" size="19"></ui-glyph></div>
        <div class="float"><svg class="float-mark" width="20" height="20" viewBox="0 0 20 20">
          <text x="6" y="10" text-anchor="middle" class="float-cn">中</text><text x="14" y="18" text-anchor="middle" class="float-a">A</text>
          <path d="M13 3h3.500v4M3 12.500V16h4.500" fill="none" stroke="#fff" stroke-width="1.600"/></svg></div>
      </div>`;
  }
}
